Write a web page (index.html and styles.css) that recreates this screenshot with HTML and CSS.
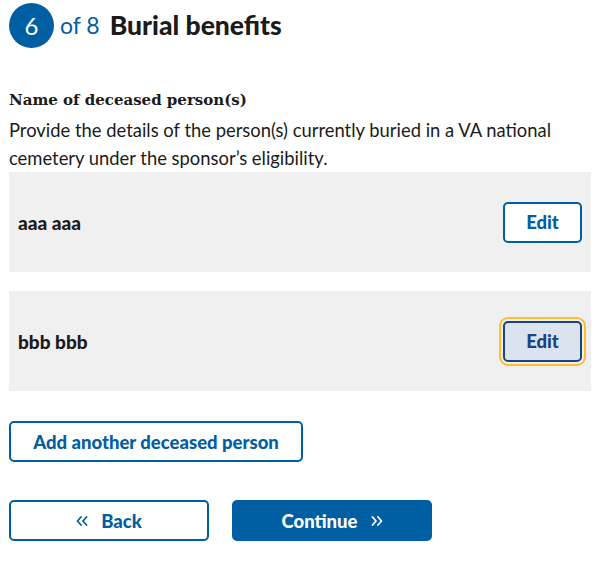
FILE: index.html
```html
<!DOCTYPE html>
<html>
<head>
<meta charset="utf-8">
<link rel="stylesheet" href="styles.css">
</head>
<body>
<div class="page">
  <h2 class="step">
    <span class="circle">6</span>
    <span class="of">of 8</span>
    <span class="title">Burial benefits</span>
  </h2>
  <h3 class="label">Name of deceased person(s)</h3>
  <p class="hint">Provide the details of the person(s) currently buried in a VA national cemetery under the sponsor’s eligibility.</p>
  <div class="card">
    <span class="name">aaa aaa</span>
    <button class="btn btn-outline btn-edit">Edit</button>
  </div>
  <div class="card">
    <span class="name">bbb bbb</span>
    <button class="btn btn-outline btn-edit focused">Edit</button>
  </div>
  <button class="btn btn-outline btn-add">Add another deceased person</button>
  <div class="nav">
    <button class="btn btn-outline btn-nav">
      <svg class="chev chev-l" width="12" height="10" viewBox="0 0 12 10"><polyline points="5,1 1.5,5 5,9" /><polyline points="10.5,1 7,5 10.5,9" /></svg>Back</button>
    <button class="btn btn-primary btn-nav">Continue<svg class="chev chev-r" width="12" height="10" viewBox="0 0 12 10"><polyline points="1.5,1 5,5 1.5,9" /><polyline points="7,1 10.5,5 7,9" /></svg></button>
  </div>
</div>
</body>
</html>
```
FILE: styles.css
```css
* { box-sizing: border-box; }
html, body { margin: 0; padding: 0; background: #fff; }
body {
  font-family: Lato, "Open Sans", "Liberation Sans", sans-serif;
  color: #1b1b1b;
}
.page { padding: 3px 9px 0 9px; }
.step {
  display: flex;
  align-items: center;
  margin: 0;
  height: 44px;
}
.circle {
  width: 45px;
  height: 45px;
  border-radius: 50%;
  background: #005ea2;
  color: #fff;
  font-weight: 400;
  font-size: 24px;
  display: flex;
  align-items: center;
  justify-content: center;
}
.of {
  color: #005ea2;
  font-weight: 400;
  font-size: 23px;
  margin-left: 6px;
}
.title {
  font-size: 26.5px;
  font-weight: 900;
  margin-left: 10px;
}
.label {
  font-family: "DejaVu Serif", "Liberation Serif", serif;
  font-size: 15px;
  font-weight: 700;
  margin: 42px 0 0 0;
  line-height: 22px;
}
.hint {
  font-size: 18.4px;
  line-height: 28px;
  margin: 5px 0 0 0;
}
.card {
  background: #f0f0f0;
  height: 100px;
  display: flex;
  align-items: center;
  justify-content: space-between;
  padding: 0 9px;
  margin-top: 0;
}
.card + .card { margin-top: 19px; }
.name { font-weight: 900; font-size: 19px; }
.btn {
  font-family: Lato, "Open Sans", "Liberation Sans", sans-serif;
  font-weight: 900;
  font-size: 18.5px;
  height: 41px;
  border-radius: 5px;
  border: 2px solid #005ea2;
  display: inline-flex;
  align-items: center;
  justify-content: center;
  padding: 0;
}
.btn-outline { background: #fff; color: #005ea2; }
.btn-primary { background: #005ea2; color: #fff; }
.btn-edit { width: 79px; }
.focused {
  background: #dbe3ee;
  border-color: #1a4480;
  color: #1a4480;
  outline: 2px solid #ffbe2e;
  outline-offset: 2px;
}
.btn-add { width: 294px; margin-top: 30px; display: flex; }
.nav { display: flex; gap: 23px; margin-top: 38px; }
.btn-nav { width: 200px; }
.chev {
  fill: none;
  stroke: currentColor;
  stroke-width: 1.8;
  stroke-linecap: round;
  stroke-linejoin: round;
}
.chev-l { margin-right: 13px; }
.chev-r { margin-left: 13px; }
```
